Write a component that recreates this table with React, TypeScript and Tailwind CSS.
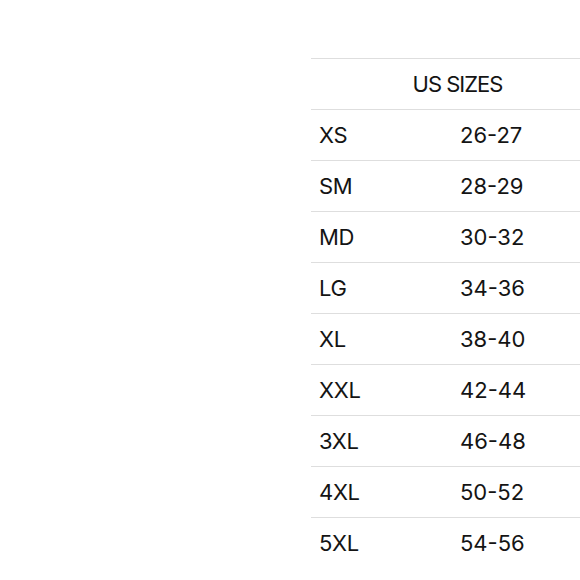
export default function App() {
  const rows = [
    ["XS", "26-27"],
    ["SM", "28-29"],
    ["MD", "30-32"],
    ["LG", "34-36"],
    ["XL", "38-40"],
    ["XXL", "42-44"],
    ["3XL", "46-48"],
    ["4XL", "50-52"],
    ["5XL", "54-56"],
  ];
  return (
    <div className="w-[580px] h-[580px] overflow-hidden bg-white" style={{ fontFamily: "Inter, 'Liberation Sans', sans-serif" }}>
      <div className="ml-[311px] mt-[58px] w-[300px] text-[22px] text-[#141414]">
        <div className="h-[51px] border-t-[1.5px] border-[#dedede] flex items-center pt-[1px]">
          <div className="w-[293px] text-center tracking-[-1px]">US SIZES</div>
        </div>
        {rows.map(([s, v]) => (
          <div key={s} className="h-[51px] border-t-[1.5px] border-[#dedede] flex items-center pt-[1px]">
            <div className="w-[141px] pl-[8px] tracking-[-0.3px]">{s}</div>
            <div className="pl-[8px]">{v}</div>
          </div>
        ))}
      </div>
    </div>
  );
}
